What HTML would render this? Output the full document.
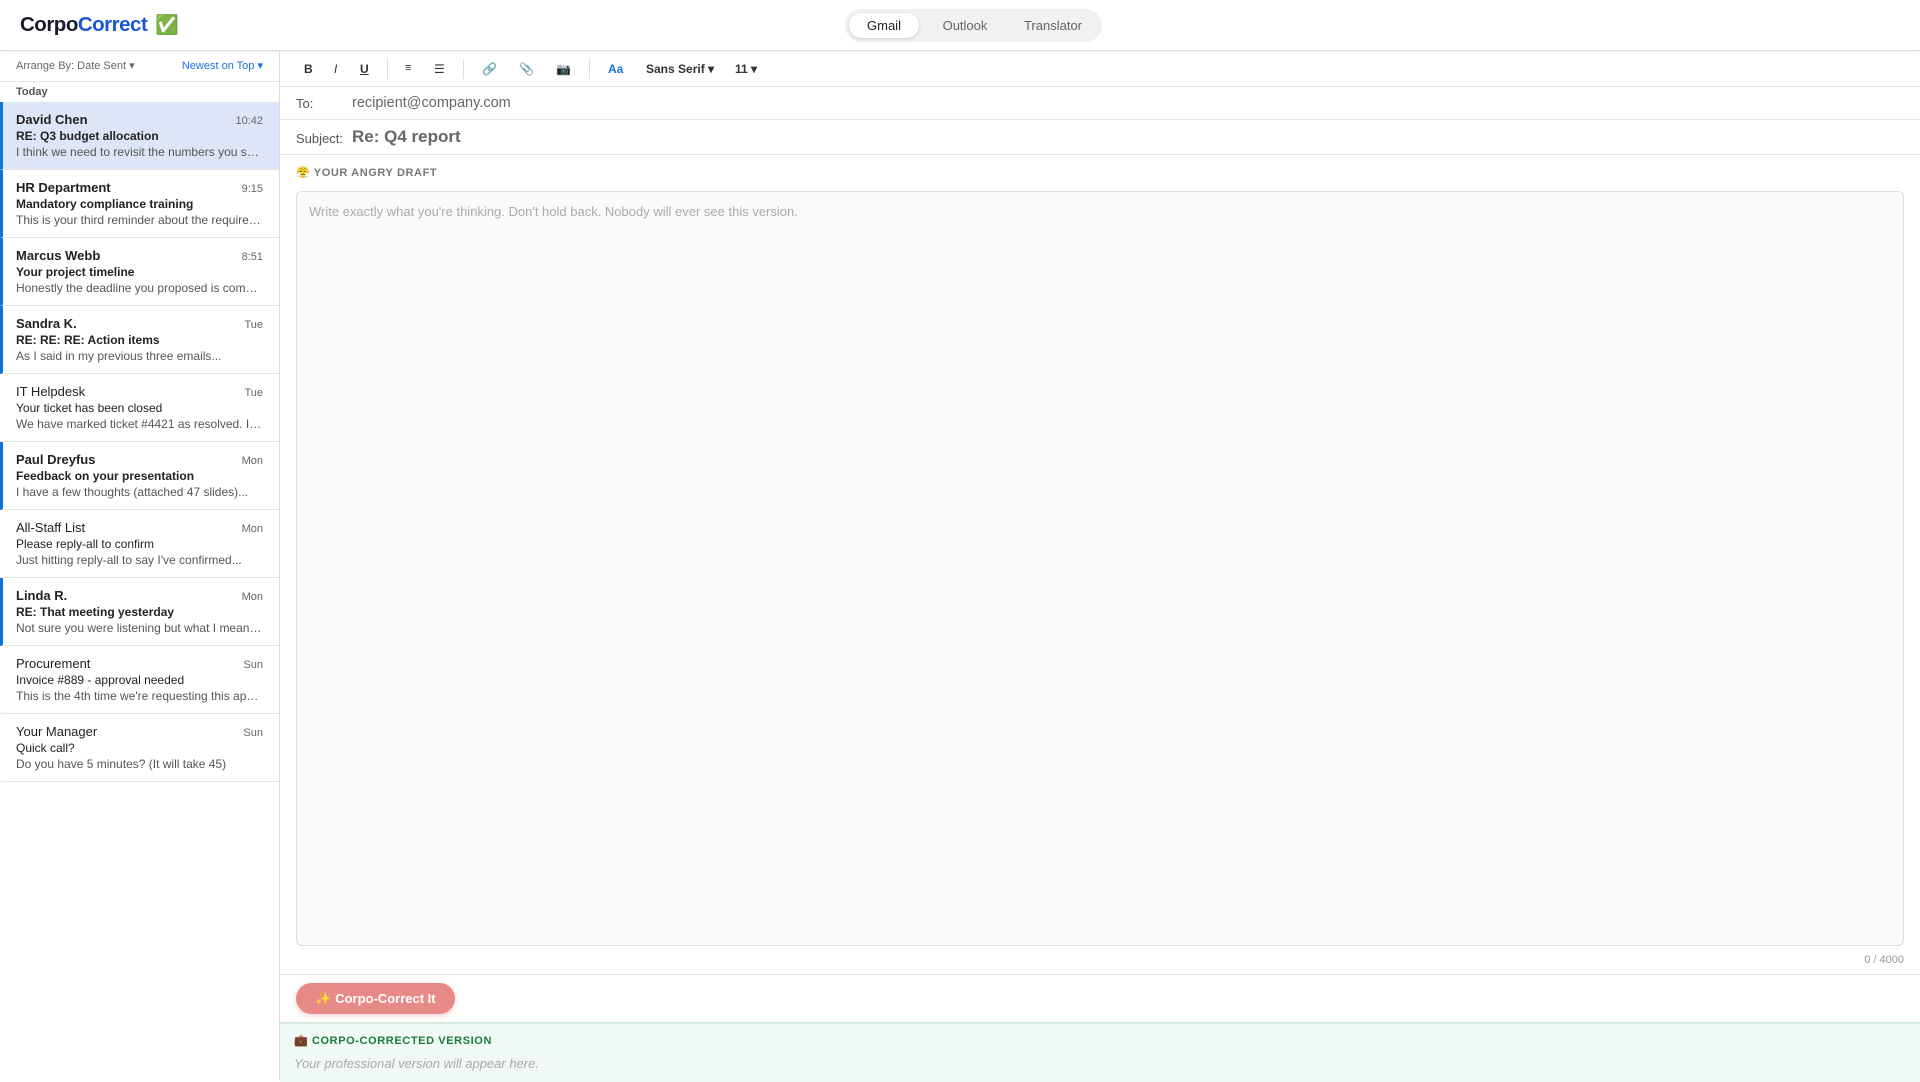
<!DOCTYPE html>
<html><head><meta charset="utf-8"><style>
*{box-sizing:border-box;margin:0;padding:0}
body{width:1920px;height:1080px;overflow:hidden;font-family:"Liberation Sans",sans-serif;background:#fff;color:#222;position:relative}
.hdr{position:absolute;left:0;top:0;width:1920px;height:51px;border-bottom:1px solid #ddd;box-shadow:0 1px 3px rgba(0,0,0,.06);background:#fff;z-index:2}
.logo{position:absolute;left:20px;top:13px;font-size:20.5px;font-weight:bold;letter-spacing:-0.5px;color:#1a1a2e}
.logo span{color:#1a56db}
.logo i{font-style:normal;font-size:19px;margin-left:8px}
.tabs{position:absolute;left:845px;top:9px;width:257px;height:33px;background:#f0f1f3;border-radius:17px}
.tab{position:absolute;top:4px;height:25px;line-height:25px;font-size:13px;color:#666;text-align:center}
.tab.on{background:#fff;color:#222;border-radius:13px;box-shadow:0 1px 3px rgba(0,0,0,.15)}
.side{position:absolute;left:0;top:51px;width:280px;height:1029px;border-right:1px solid #ddd;background:#fff}
.sh{height:31px;border-bottom:1px solid #e5e5e5;font-size:11px;color:#666;padding:8px 16px 0}
.sh b{float:right;font-weight:normal;color:#1a73d9}
.today{font-size:11px;font-weight:bold;color:#555;padding:4px 16px 0;height:20px}
.it{position:relative;height:68px;border-bottom:1px solid #e5e5e5;padding:10px 16px 0 13px;border-left:3px solid transparent}
.it.u{border-left-color:#0a74da}
.it.sel{background:#dde6f6}
.it .n{font-size:13px;color:#222;line-height:16px}
.it .t{position:absolute;right:16px;top:13px;font-size:11px;color:#666}
.it .s{font-size:12px;color:#222;line-height:16px}
.it .p{font-size:12px;color:#555;line-height:16px;white-space:nowrap;overflow:hidden;text-overflow:ellipsis}
.it.u .n,.it.u .s{font-weight:bold}
.main{position:absolute;left:280px;top:51px;width:1640px;height:1029px}
.tb{height:36px;border-bottom:1px solid #e8e8e8;position:relative;font-size:12px}
.tb span{position:absolute;top:11px;color:#333}
.sep{position:absolute;top:8px;width:1px;height:20px;background:#ddd}
.row{height:33px;border-bottom:1px solid #e8e8e8;position:relative;font-size:13px;color:#555}
.lbl{position:absolute;left:16px;top:9px}
.lab{position:absolute;left:16px;top:115px;font-size:11px;font-weight:bold;color:#777;letter-spacing:.6px}
.ta{position:absolute;left:16px;top:140px;width:1608px;height:755px;border:1px solid #ddd;border-radius:6px;background:#fafafa;padding:12px;font-size:13px;color:#aaa}
.cnt{position:absolute;right:16px;top:903px;font-size:11px;color:#999}
.bl{position:absolute;left:0;top:923px;width:1640px;height:1px;background:#e8e8e8}
.btn{position:absolute;left:16px;top:932px;width:159px;height:31px;border-radius:16px;background:#e78a87;color:#fff;font-size:13px;font-weight:bold;text-align:center;line-height:31px;box-shadow:0 2px 6px rgba(230,120,120,.3)}
.gr{position:absolute;left:0;top:971px;width:1640px;height:60px;background:#f0f9f3;border-top:2px solid #d6ebdd}
.gl{position:absolute;left:14px;top:10px;font-size:11px;font-weight:bold;color:#1e7a3c;letter-spacing:.6px}
.gp{position:absolute;left:14px;top:32px;font-size:13px;font-style:italic;color:#aaa}
</style></head><body>
<div class="hdr">
<div class="logo">Corpo<span>Correct</span><i>✅</i></div>
<div class="tabs">
<div class="tab on" style="left:4px;width:70px">Gmail</div>
<div class="tab" style="left:80px;width:80px">Outlook</div>
<div class="tab" style="left:168px;width:80px">Translator</div>
</div>
</div>
<div class="side">
<div class="sh">Arrange By: Date Sent ▾<b>Newest on Top ▾</b></div>
<div class="today">Today</div>
<div class="it u sel"><div class="n">David Chen</div><div class="t">10:42</div><div class="s">RE: Q3 budget allocation</div><div class="p">I think we need to revisit the numbers you sent over yesterday...</div></div>
<div class="it u"><div class="n">HR Department</div><div class="t">9:15</div><div class="s">Mandatory compliance training</div><div class="p">This is your third reminder about the required training...</div></div>
<div class="it u"><div class="n">Marcus Webb</div><div class="t">8:51</div><div class="s">Your project timeline</div><div class="p">Honestly the deadline you proposed is completely unrealistic...</div></div>
<div class="it u"><div class="n">Sandra K.</div><div class="t">Tue</div><div class="s">RE: RE: RE: Action items</div><div class="p">As I said in my previous three emails...</div></div>
<div class="it"><div class="n">IT Helpdesk</div><div class="t">Tue</div><div class="s">Your ticket has been closed</div><div class="p">We have marked ticket #4421 as resolved. If the issue persists...</div></div>
<div class="it u"><div class="n">Paul Dreyfus</div><div class="t">Mon</div><div class="s">Feedback on your presentation</div><div class="p">I have a few thoughts (attached 47 slides)...</div></div>
<div class="it"><div class="n">All-Staff List</div><div class="t">Mon</div><div class="s">Please reply-all to confirm</div><div class="p">Just hitting reply-all to say I've confirmed...</div></div>
<div class="it u"><div class="n">Linda R.</div><div class="t">Mon</div><div class="s">RE: That meeting yesterday</div><div class="p">Not sure you were listening but what I meant was...</div></div>
<div class="it"><div class="n">Procurement</div><div class="t">Sun</div><div class="s">Invoice #889 - approval needed</div><div class="p">This is the 4th time we're requesting this approval...</div></div>
<div class="it"><div class="n">Your Manager</div><div class="t">Sun</div><div class="s">Quick call?</div><div class="p">Do you have 5 minutes? (It will take 45)</div></div>
</div>
<div class="main">
<div class="tb">
<span style="left:24px;font-weight:bold">B</span>
<span style="left:54px;font-style:italic">I</span>
<span style="left:80px;text-decoration:underline;font-weight:bold">U</span>
<div class="sep" style="left:107px"></div>
<span style="left:125px;font-size:11px">≡</span>
<span style="left:154px">☰</span>
<div class="sep" style="left:183px"></div>
<span style="left:202px">🔗</span>
<span style="left:239px">📎</span>
<span style="left:276px">📷</span>
<div class="sep" style="left:309px"></div>
<span style="left:328px;color:#1a73d9;font-weight:bold">Aa</span>
<span style="left:366px;font-weight:bold">Sans Serif ▾</span>
<span style="left:455px;font-weight:bold">11 ▾</span>
</div>
<div class="row"><span class="lbl">To:</span><span style="position:absolute;left:72px;top:8px;font-size:14.5px;color:#666">recipient@company.com</span></div>
<div class="row" style="height:35px"><span class="lbl" style="top:11px">Subject:</span><span style="position:absolute;left:72px;top:7px;font-size:17px;font-weight:bold;color:#666">Re: Q4 report</span></div>
<div class="lab">😤 YOUR ANGRY DRAFT</div>
<div class="ta">Write exactly what you're thinking. Don't hold back. Nobody will ever see this version.</div>
<div class="cnt">0 / 4000</div>
<div class="bl"></div>
<div class="btn">✨ Corpo-Correct It</div>
<div class="gr"><div class="gl">💼 CORPO-CORRECTED VERSION</div><div class="gp">Your professional version will appear here.</div></div>
</div>
</body></html>
